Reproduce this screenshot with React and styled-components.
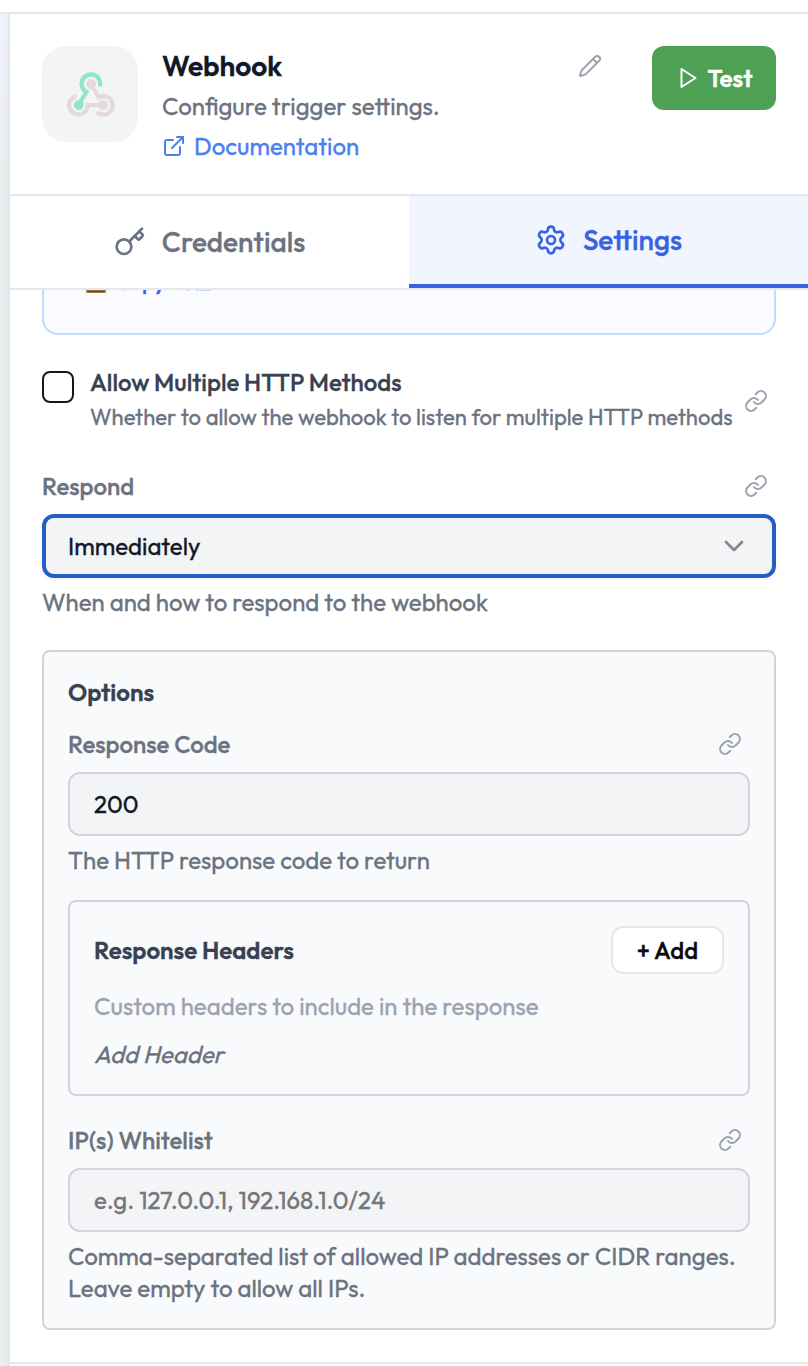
import React from 'react'
import styled, { createGlobalStyle } from 'styled-components'
import { ChevronDown, ExternalLink, Key, Link, Pencil, Settings } from 'lucide-react'

const GlobalStyle = createGlobalStyle`
  * {
    box-sizing: border-box;
  }
  body {
    margin: 0;
    background: #ffffff;
    font-family: Outfit, Lato, sans-serif;
    font-size: 24px;
    line-height: 32px;
    color: #111827;
    -webkit-text-stroke: 0.3px;
  }
  button, input {
    font-family: inherit;
  }
`

const Page = styled.div`
  display: flex;
  flex-direction: column;
  height: 1366px;
  overflow: hidden;
`

const TopBar = styled.div`
  flex: none;
  height: 14px;
  border-bottom: 2px solid #e5e7eb;
`

const Main = styled.div`
  display: flex;
  flex: 1;
  min-height: 0;
`

const Canvas = styled.div`
  flex: none;
  width: 8px;
  background: linear-gradient(to right, rgba(0, 0, 0, 0), rgba(0, 0, 0, 0.025)),
    linear-gradient(#f1f5fc, #eaeff2 160px, #eaeff2);
`

const Panel = styled.div`
  flex: 1;
  min-width: 0;
  display: flex;
  flex-direction: column;
  border-left: 2px solid #e5e7eb;
  background: #ffffff;
`

const Header = styled.header`
  flex: none;
  display: flex;
  align-items: flex-start;
  height: 182px;
  padding: 32px 32px 0;
  border-bottom: 2px solid #e5e7eb;
`

const NodeIcon = styled.div`
  display: flex;
  align-items: center;
  justify-content: center;
  width: 96px;
  height: 96px;
  margin-right: 24px;
  padding-left: 2px;
  border-radius: 24px;
  background: #f3f4f6;
`

const HeaderText = styled.div`
  flex: 1;
  line-height: 40px;
`

const Title = styled.h1`
  margin: 0;
  font-size: 28px;
  font-weight: 600;
  line-height: 40px;
`

const Subtitle = styled.div`
  color: #6b7280;
`

const DocLink = styled.a`
  display: flex;
  align-items: center;
  gap: 8px;
  color: #4a80f0;
`

const EditButton = styled.button`
  display: flex;
  margin: 8px 50px 0 0;
  padding: 0;
  border: none;
  background: none;
  color: #9ca3af;
`

const TestButton = styled.button`
  display: flex;
  align-items: center;
  justify-content: center;
  gap: 8px;
  width: 124px;
  height: 64px;
  padding: 0;
  border: none;
  border-radius: 12px;
  background: #4ea154;
  color: #ffffff;
  font-size: 24px;
  font-weight: 600;
`

const Tabs = styled.div`
  flex: none;
  display: grid;
  grid-template-columns: 1fr 1fr;
  height: 94px;
  border-bottom: 2px solid #e5e7eb;
`

const Tab = styled.div`
  display: flex;
  align-items: center;
  justify-content: center;
  gap: 16px;
  font-size: 28px;
  font-weight: 500;
  color: ${p => p.$active ? '#3662e3' : '#6b7280'};
  background: ${p => p.$active ? '#f0f5fe' : '#ffffff'};
  border-bottom: ${p => p.$active ? '4px solid #3662e3' : 'none'};
`

const Content = styled.div`
  flex: none;
  height: 1072px;
  padding: 0 32px;
  overflow: hidden;
`

const UrlBox = styled.div`
  height: 45px;
  padding-left: 40px;
  border: 2px solid #bfdbfe;
  border-top: none;
  border-radius: 0 0 16px 16px;
  background: #fafbff;
  overflow: hidden;
`

const CopyRow = styled.div`
  display: flex;
  align-items: center;
  gap: 7px;
  margin-top: -24px;
  color: #3662e3;
  font-size: 22px;
  font-weight: 500;
`

const CheckRow = styled.div`
  display: flex;
  align-items: center;
  margin-top: 31px;
  padding-right: 8px;
`

const Checkbox = styled.div`
  align-self: flex-start;
  width: 32px;
  height: 32px;
  margin: 5px 16px 0 0;
  border: 2px solid #18181b;
  border-radius: 8px;
`

const CheckText = styled.div`
  flex: 1;
  padding-bottom: 3px;
  white-space: nowrap;
`

const CheckLabel = styled.div`
  color: #374151;
  font-weight: 500;
`

const CheckHint = styled.div`
  margin-top: 3px;
  color: #6b7280;
  font-size: 22px;
`

const Field = styled.div`
  margin-top: ${p => p.$top}px;
`

const LabelRow = styled.div`
  display: flex;
  align-items: center;
  justify-content: space-between;
  height: 32px;
  padding-right: 8px;
  margin-bottom: 12px;
`

const Label = styled.label`
  color: #6b7280;
  font-weight: 500;
`

const Select = styled.div`
  display: flex;
  align-items: center;
  justify-content: space-between;
  height: 64px;
  padding: 0 22px;
  border: 4px solid #245fc6;
  border-radius: 12px;
  background: #f3f4f6;
  box-shadow: 0 2px 4px rgba(0, 0, 0, 0.04);
`

const Input = styled.input`
  display: block;
  width: 100%;
  height: 64px;
  padding: 0 24px;
  border: 2px solid #d1d5db;
  border-radius: 12px;
  background: #f3f4f6;
  color: #111827;
  font-size: 24px;

  &::placeholder {
    color: #757579;
    opacity: 1;
  }
`

const Hint = styled.div`
  margin-top: 8px;
  color: #6b7280;
`

const Group = styled.section`
  margin-top: ${p => p.$top}px;
  padding: 24px;
  border: 2px solid #d1d5db;
  border-radius: 8px;
  background: #f9fafc;
`

const GroupTitle = styled.div`
  color: #374151;
  font-weight: 600;
`

const GroupHead = styled.div`
  display: flex;
  align-items: center;
  justify-content: space-between;
  height: 48px;
`

const AddButton = styled.button`
  width: 113px;
  height: 48px;
  padding: 0;
  border: 2px solid #e5e7eb;
  border-radius: 12px;
  background: #ffffff;
  color: #09090b;
  font-size: 24px;
  font-weight: 500;
`

const Description = styled.div`
  margin-top: 16px;
  color: #9ca3af;
`

const Empty = styled.div`
  margin-top: 16px;
  color: #6b7280;
  font-style: italic;
`

const Footer = styled.footer`
  flex: 1;
  border-top: 2px solid #e5e7eb;
`

const WebhookLogo = () => (
  <svg width="48" height="45" viewBox="0 0 256 239">
    <path fill="#92e5cc" d="M119.54 100.503c-10.61 17.836-20.775 35.108-31.152 52.25-2.665 4.401-3.984 7.986-1.855 13.58 5.878 15.454-2.414 30.493-17.998 34.575-14.697 3.851-29.016-5.808-31.932-21.543-2.584-13.927 8.224-27.58 23.58-29.757 1.286-.184 2.6-.205 4.762-.367l23.358-39.168C73.612 95.465 64.868 78.39 66.803 57.23c1.368-14.957 7.25-27.883 18-38.477 20.59-20.288 52.002-23.573 76.246-8.001 23.284 14.958 33.948 44.094 24.858 69.031-6.854-1.858-13.756-3.732-21.343-5.79 2.854-13.865.743-26.315-8.608-36.981-6.178-7.042-14.106-10.733-23.12-12.093-18.072-2.73-35.815 8.88-41.08 26.618-5.976 20.13 3.069 36.575 27.784 48.965z" />
    <path fill="#e3dbd9" d="M149.841 79.41c7.475 13.187 15.065 26.573 22.587 39.836 38.02-11.763 66.686 9.284 76.97 31.817 12.422 27.219 3.93 59.457-20.465 76.25-25.04 17.238-56.707 14.293-78.892-7.851 5.654-4.733 11.336-9.487 17.407-14.566 21.912 14.192 41.077 13.524 55.305-3.282 12.133-14.337 11.87-35.714-.615-49.75-14.408-16.197-33.707-16.691-57.035-1.143-9.677-17.168-19.522-34.199-28.893-51.491-3.16-5.828-6.648-9.21-13.77-10.443-11.893-2.062-19.571-12.275-20.032-23.717-.453-11.316 6.214-21.545 16.634-25.53 10.322-3.949 22.435-.762 29.378 8.014 5.674 7.17 7.477 15.24 4.491 24.083-.83 2.466-1.905 4.852-3.07 7.774z" />
    <path fill="#e3dbd9" d="M167.707 187.21h-45.77c-4.387 18.044-13.863 32.612-30.19 41.876-12.693 7.2-26.373 9.641-40.933 7.29-26.808-4.323-48.728-28.456-50.658-55.63-2.184-30.784 18.975-58.147 47.178-64.293 1.947 7.071 3.915 14.21 5.862 21.264-25.876 13.202-34.832 29.836-27.59 50.636 6.375 18.304 24.484 28.337 44.147 24.457 20.08-3.962 30.204-20.65 28.968-47.432 19.036 0 38.088-.197 57.126.097 7.434.117 13.173-.654 18.773-7.208 9.22-10.784 26.191-9.811 36.121.374 10.148 10.409 9.662 27.157-1.077 37.127-10.361 9.62-26.73 9.106-36.424-1.26-1.992-2.136-3.562-4.673-5.533-7.298z" />
  </svg>
)

const PlayIcon = () => (
  <svg width="24" height="24" viewBox="0 0 24 24" fill="none" stroke="currentColor" strokeWidth="2" strokeLinejoin="round">
    <polygon points="6.5 3 20.5 12 6.5 21 6.5 3" />
  </svg>
)

const ClipboardIcon = () => (
  <svg width="24" height="28" viewBox="0 0 24 28">
    <rect x="2" y="3" width="20" height="22" rx="1" fill="#a88455" />
    <rect x="4" y="6" width="16" height="14" fill="#ffffff" />
    <rect x="3.5" y="22.8" width="17" height="1.4" fill="#5f4630" />
    <rect x="8" y="1" width="8" height="5" rx="1" fill="#9ca3af" />
  </svg>
)

const BindIcon = () => <Link size={24} color="#9ca3af" />

const App = () => {
  return (
    <Page>
      <GlobalStyle />
      <TopBar />
      <Main>
        <Canvas />
        <Panel>
          <Header>
            <NodeIcon><WebhookLogo /></NodeIcon>
            <HeaderText>
              <Title>Webhook</Title>
              <Subtitle>Configure trigger settings.</Subtitle>
              <DocLink><ExternalLink size={24} />Documentation</DocLink>
            </HeaderText>
            <EditButton><Pencil size={24} /></EditButton>
            <TestButton><PlayIcon />Test</TestButton>
          </Header>
          <Tabs>
            <Tab><Key size={32} />Credentials</Tab>
            <Tab $active><Settings size={32} />Settings</Tab>
          </Tabs>
          <Content>
            <UrlBox>
              <CopyRow><ClipboardIcon />Copy URL</CopyRow>
            </UrlBox>
            <CheckRow>
              <Checkbox />
              <CheckText>
                <CheckLabel>Allow Multiple HTTP Methods</CheckLabel>
                <CheckHint>Whether to allow the webhook to listen for multiple HTTP methods</CheckHint>
              </CheckText>
              <BindIcon />
            </CheckRow>
            <Field $top={34}>
              <LabelRow><Label>Respond</Label><BindIcon /></LabelRow>
              <Select>Immediately<ChevronDown size={32} color="#84868e" /></Select>
              <Hint>When and how to respond to the webhook</Hint>
            </Field>
            <Group $top={32}>
              <GroupTitle>Options</GroupTitle>
              <Field $top={20}>
                <LabelRow><Label>Response Code</Label><BindIcon /></LabelRow>
                <Input defaultValue="200" />
                <Hint>The HTTP response code to return</Hint>
              </Field>
              <Group $top={24}>
                <GroupHead>
                  <GroupTitle>Response Headers</GroupTitle>
                  <AddButton>+ Add</AddButton>
                </GroupHead>
                <Description>Custom headers to include in the response</Description>
                <Empty>Add Header</Empty>
              </Group>
              <Field $top={28}>
                <LabelRow><Label>IP(s) Whitelist</Label><BindIcon /></LabelRow>
                <Input placeholder="e.g. 127.0.0.1, 192.168.1.0/24" />
                <Hint>Comma-separated list of allowed IP addresses or CIDR ranges. Leave empty to allow all IPs.</Hint>
              </Field>
            </Group>
          </Content>
          <Footer />
        </Panel>
      </Main>
    </Page>
  )
}

export default App
